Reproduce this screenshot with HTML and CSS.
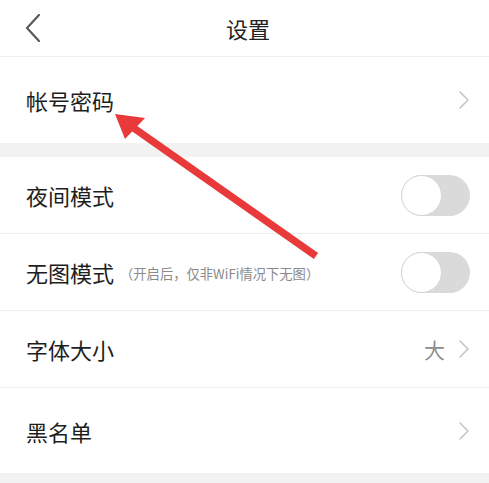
FILE: index.html
```html
<!DOCTYPE html>
<html lang="zh">
<head>
<meta charset="utf-8">
<title>设置</title>
<link rel="stylesheet" href="styles.css">
</head>
<body>
<div class="page">
  <header class="topbar">
    <svg class="back" width="16" height="28" viewBox="0 0 16 28"><polyline points="14,1 2,14 14,27" fill="none" stroke="#5a5a5a" stroke-width="2.2" stroke-linecap="round" stroke-linejoin="round"/></svg>
    <h1 class="title">设置</h1>
  </header>

  <section class="group">
    <div class="row row-tall">
      <span class="label">帐号密码</span>
      <span class="right"><svg class="chev" width="12" height="20" viewBox="0 0 12 20"><polyline points="2,2 10,10 2,18" fill="none" stroke="#c4c4c4" stroke-width="1.6" stroke-linecap="round" stroke-linejoin="round"/></svg></span>
    </div>
  </section>

  <div class="gap"></div>

  <section class="group">
    <div class="row">
      <span class="label">夜间模式</span>
      <span class="right"><span class="toggle"><span class="knob"></span></span></span>
    </div>
    <div class="row">
      <span class="label">无图模式<span class="note">（开启后，仅非WiFi情况下无图）</span></span>
      <span class="right"><span class="toggle"><span class="knob"></span></span></span>
    </div>
    <div class="row">
      <span class="label">字体大小</span>
      <span class="right"><span class="value">大</span><svg class="chev" width="12" height="20" viewBox="0 0 12 20"><polyline points="2,2 10,10 2,18" fill="none" stroke="#c4c4c4" stroke-width="1.6" stroke-linecap="round" stroke-linejoin="round"/></svg></span>
    </div>
    <div class="row row-last">
      <span class="label">黑名单</span>
      <span class="right"><svg class="chev" width="12" height="20" viewBox="0 0 12 20"><polyline points="2,2 10,10 2,18" fill="none" stroke="#c4c4c4" stroke-width="1.6" stroke-linecap="round" stroke-linejoin="round"/></svg></span>
    </div>
  </section>

  <div class="gap gap-end"></div>

  <svg class="arrow" width="489" height="483" viewBox="0 0 489 483">
    <line x1="316" y1="256" x2="128" y2="124" stroke="#e83a3b" stroke-width="7.5" stroke-linecap="butt"/>
    <polygon points="115,114 145,118 125,139" fill="#e83a3b"/>
  </svg>
</div>
</body>
</html>
```

FILE: styles.css
```css
html, body {
  margin: 0;
  padding: 0;
  background: #ffffff;
}

body {
  font-family: "Noto Sans CJK SC", "Noto Sans", sans-serif;
  color: #222222;
}

.page {
  position: relative;
  width: 489px;
  height: 483px;
  overflow: hidden;
}

.topbar {
  position: relative;
  height: 56px;
  border-bottom: 1px solid #efefef;
  display: flex;
  align-items: center;
  justify-content: center;
}

.back {
  position: absolute;
  left: 25px;
  top: 14px;
}

.title {
  margin: 0 0 0 7px;
  font-size: 22px;
  font-weight: normal;
  color: #222222;
}

.group {
  display: flex;
  flex-direction: column;
}

.row {
  height: 76px;
  border-bottom: 1px solid #eeeeee;
  display: flex;
  align-items: center;
  justify-content: space-between;
  padding: 0 19px 0 26px;
}

.row-tall {
  height: 86px;
  border-bottom: none;
}

.row-last {
  height: 85px;
  border-bottom: none;
}

.label {
  font-size: 22px;
  color: #1e1e1e;
  display: flex;
  align-items: center;
}

.note {
  font-size: 13.3px;
  color: #8a8a8a;
  margin-left: 6px;
  margin-top: 2px;
}

.right {
  display: flex;
  align-items: center;
}

.value {
  font-size: 21px;
  color: #8c8c8c;
  margin-right: 13px;
}

.chev {
  display: block;
}

.toggle {
  display: block;
  position: relative;
  width: 69px;
  height: 41px;
  border-radius: 21px;
  background: #dadada;
}

.knob {
  position: absolute;
  left: 0;
  top: 0;
  width: 39px;
  height: 39px;
  border-radius: 50%;
  background: #ffffff;
  border: 1px solid #d6d6d6;
}

.gap {
  height: 14px;
  background: #f2f2f2;
}

.gap-end {
  height: 10px;
}

.arrow {
  position: absolute;
  left: 0;
  top: 0;
  pointer-events: none;
}
```
